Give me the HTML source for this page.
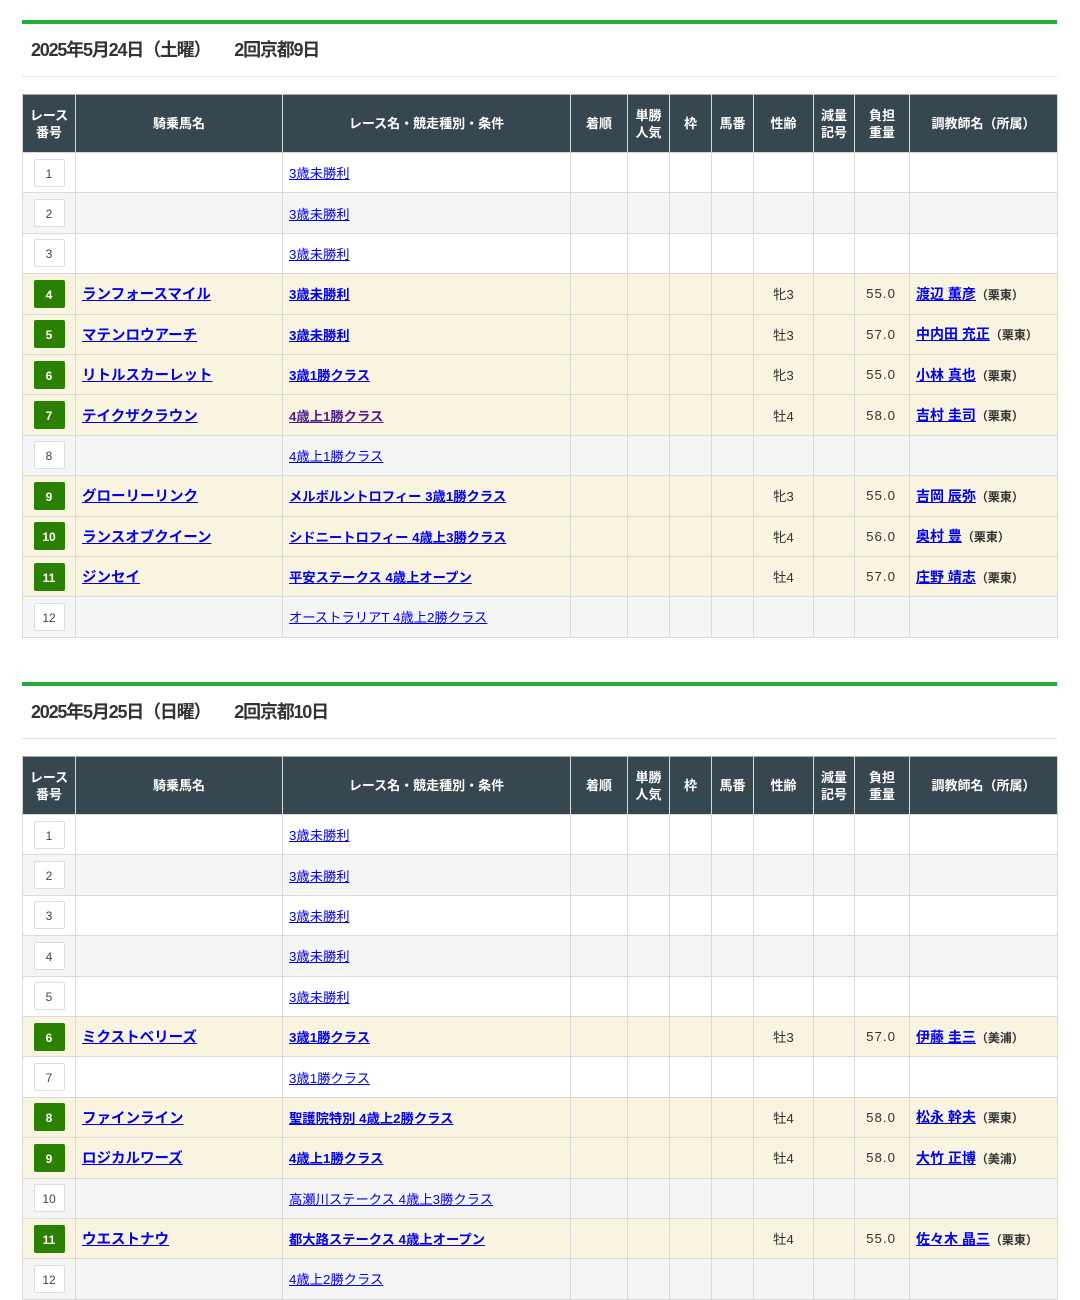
<!DOCTYPE html>
<html><head><meta charset="utf-8"><style>
*{margin:0;padding:0;box-sizing:border-box}
body{width:1080px;height:1293px;overflow:hidden;background:#fff;font-family:"Liberation Sans Narrow","Liberation Sans","Noto Sans CJK JP",sans-serif;color:#333;position:relative}
.sec{position:absolute;left:22px;width:1035px}
.bar{height:4px;background:#22ac38}
.ttl{height:53px;border-bottom:1px solid #e3e3e3;font-size:18px;font-weight:bold;color:#333;padding-left:9px;line-height:53px;letter-spacing:-1.2px}
.ttl span{margin-left:24px}
table{margin-top:17px;border-collapse:collapse;width:1035px;table-layout:fixed;font-size:13.3px}
th{background:#37474f;color:#fff;font-size:13px;font-weight:bold;height:58px;border:1px solid #d6d6d6;line-height:17px;border-top:1px solid #aaa}
td{height:40.4px;border:1px solid #dadada;padding:0 6px;white-space:nowrap}
tr.w td{background:#fff}tr.g td{background:#f5f5f5}tr.a td{background:#f8f4e0}
td.n{text-align:center;padding:0}
.b{display:inline-block;width:31px;height:28px;line-height:28px;border:1px solid #ddd;border-radius:2px;background:#fff;font-size:12px;color:#444;text-align:center}
.b.on{background:#2a8000;color:#fff;border-color:#2a8000;font-weight:bold}
a{color:#00e;text-decoration:underline}
tr.a a{font-weight:bold}
td.h a{font-size:14.5px}
td.t a{font-size:14px}
td.c{text-align:center}td.r{text-align:right;padding-right:13px;letter-spacing:1px}
small{font-size:12px;font-weight:bold;color:#333}
</style></head><body>

<div class="sec" style="top:20px">
<div class="bar"></div>
<div class="ttl">2025年5月24日（土曜）<span>2回京都9日</span></div>
<table>
<colgroup><col style="width:53px"><col style="width:207px"><col style="width:288px"><col style="width:57px"><col style="width:42px"><col style="width:42px"><col style="width:42px"><col style="width:60px"><col style="width:41px"><col style="width:55px"><col style="width:148px"></colgroup>
<tr><th>レース<br>番号</th><th>騎乗馬名</th><th>レース名・競走種別・条件</th><th>着順</th><th>単勝<br>人気</th><th>枠</th><th>馬番</th><th>性齢</th><th>減量<br>記号</th><th>負担<br>重量</th><th>調教師名（所属）</th></tr>
<tr class="w"><td class="n"><span class="b">1</span></td><td></td><td><a>3歳未勝利</a></td><td></td><td></td><td></td><td></td><td></td><td></td><td></td><td></td></tr>
<tr class="g"><td class="n"><span class="b">2</span></td><td></td><td><a>3歳未勝利</a></td><td></td><td></td><td></td><td></td><td></td><td></td><td></td><td></td></tr>
<tr class="w"><td class="n"><span class="b">3</span></td><td></td><td><a>3歳未勝利</a></td><td></td><td></td><td></td><td></td><td></td><td></td><td></td><td></td></tr>
<tr class="a"><td class="n"><span class="b on">4</span></td><td class="h"><a>ランフォースマイル</a></td><td><a>3歳未勝利</a></td><td></td><td></td><td></td><td></td><td class="c">牝3</td><td></td><td class="r">55.0</td><td class="t"><a>渡辺 薫彦</a><small>（栗東）</small></td></tr>
<tr class="a"><td class="n"><span class="b on">5</span></td><td class="h"><a>マテンロウアーチ</a></td><td><a>3歳未勝利</a></td><td></td><td></td><td></td><td></td><td class="c">牡3</td><td></td><td class="r">57.0</td><td class="t"><a>中内田 充正</a><small>（栗東）</small></td></tr>
<tr class="a"><td class="n"><span class="b on">6</span></td><td class="h"><a>リトルスカーレット</a></td><td><a>3歳1勝クラス</a></td><td></td><td></td><td></td><td></td><td class="c">牝3</td><td></td><td class="r">55.0</td><td class="t"><a>小林 真也</a><small>（栗東）</small></td></tr>
<tr class="a"><td class="n"><span class="b on">7</span></td><td class="h"><a>テイクザクラウン</a></td><td><a style="color:#551a8b">4歳上1勝クラス</a></td><td></td><td></td><td></td><td></td><td class="c">牡4</td><td></td><td class="r">58.0</td><td class="t"><a>吉村 圭司</a><small>（栗東）</small></td></tr>
<tr class="g"><td class="n"><span class="b">8</span></td><td></td><td><a>4歳上1勝クラス</a></td><td></td><td></td><td></td><td></td><td></td><td></td><td></td><td></td></tr>
<tr class="a"><td class="n"><span class="b on">9</span></td><td class="h"><a>グローリーリンク</a></td><td><a>メルボルントロフィー 3歳1勝クラス</a></td><td></td><td></td><td></td><td></td><td class="c">牝3</td><td></td><td class="r">55.0</td><td class="t"><a>吉岡 辰弥</a><small>（栗東）</small></td></tr>
<tr class="a"><td class="n"><span class="b on">10</span></td><td class="h"><a>ランスオブクイーン</a></td><td><a>シドニートロフィー 4歳上3勝クラス</a></td><td></td><td></td><td></td><td></td><td class="c">牝4</td><td></td><td class="r">56.0</td><td class="t"><a>奥村 豊</a><small>（栗東）</small></td></tr>
<tr class="a"><td class="n"><span class="b on">11</span></td><td class="h"><a>ジンセイ</a></td><td><a>平安ステークス 4歳上オープン</a></td><td></td><td></td><td></td><td></td><td class="c">牡4</td><td></td><td class="r">57.0</td><td class="t"><a>庄野 靖志</a><small>（栗東）</small></td></tr>
<tr class="g"><td class="n"><span class="b">12</span></td><td></td><td><a>オーストラリアT 4歳上2勝クラス</a></td><td></td><td></td><td></td><td></td><td></td><td></td><td></td><td></td></tr>
</table>
</div>

<div class="sec" style="top:682px">
<div class="bar"></div>
<div class="ttl">2025年5月25日（日曜）<span>2回京都10日</span></div>
<table>
<colgroup><col style="width:53px"><col style="width:207px"><col style="width:288px"><col style="width:57px"><col style="width:42px"><col style="width:42px"><col style="width:42px"><col style="width:60px"><col style="width:41px"><col style="width:55px"><col style="width:148px"></colgroup>
<tr><th>レース<br>番号</th><th>騎乗馬名</th><th>レース名・競走種別・条件</th><th>着順</th><th>単勝<br>人気</th><th>枠</th><th>馬番</th><th>性齢</th><th>減量<br>記号</th><th>負担<br>重量</th><th>調教師名（所属）</th></tr>
<tr class="w"><td class="n"><span class="b">1</span></td><td></td><td><a>3歳未勝利</a></td><td></td><td></td><td></td><td></td><td></td><td></td><td></td><td></td></tr>
<tr class="g"><td class="n"><span class="b">2</span></td><td></td><td><a>3歳未勝利</a></td><td></td><td></td><td></td><td></td><td></td><td></td><td></td><td></td></tr>
<tr class="w"><td class="n"><span class="b">3</span></td><td></td><td><a>3歳未勝利</a></td><td></td><td></td><td></td><td></td><td></td><td></td><td></td><td></td></tr>
<tr class="g"><td class="n"><span class="b">4</span></td><td></td><td><a>3歳未勝利</a></td><td></td><td></td><td></td><td></td><td></td><td></td><td></td><td></td></tr>
<tr class="w"><td class="n"><span class="b">5</span></td><td></td><td><a>3歳未勝利</a></td><td></td><td></td><td></td><td></td><td></td><td></td><td></td><td></td></tr>
<tr class="a"><td class="n"><span class="b on">6</span></td><td class="h"><a>ミクストベリーズ</a></td><td><a>3歳1勝クラス</a></td><td></td><td></td><td></td><td></td><td class="c">牡3</td><td></td><td class="r">57.0</td><td class="t"><a>伊藤 圭三</a><small>（美浦）</small></td></tr>
<tr class="w"><td class="n"><span class="b">7</span></td><td></td><td><a>3歳1勝クラス</a></td><td></td><td></td><td></td><td></td><td></td><td></td><td></td><td></td></tr>
<tr class="a"><td class="n"><span class="b on">8</span></td><td class="h"><a>ファインライン</a></td><td><a>聖護院特別 4歳上2勝クラス</a></td><td></td><td></td><td></td><td></td><td class="c">牡4</td><td></td><td class="r">58.0</td><td class="t"><a>松永 幹夫</a><small>（栗東）</small></td></tr>
<tr class="a"><td class="n"><span class="b on">9</span></td><td class="h"><a>ロジカルワーズ</a></td><td><a>4歳上1勝クラス</a></td><td></td><td></td><td></td><td></td><td class="c">牡4</td><td></td><td class="r">58.0</td><td class="t"><a>大竹 正博</a><small>（美浦）</small></td></tr>
<tr class="g"><td class="n"><span class="b">10</span></td><td></td><td><a>高瀬川ステークス 4歳上3勝クラス</a></td><td></td><td></td><td></td><td></td><td></td><td></td><td></td><td></td></tr>
<tr class="a"><td class="n"><span class="b on">11</span></td><td class="h"><a>ウエストナウ</a></td><td><a>都大路ステークス 4歳上オープン</a></td><td></td><td></td><td></td><td></td><td class="c">牡4</td><td></td><td class="r">55.0</td><td class="t"><a>佐々木 晶三</a><small>（栗東）</small></td></tr>
<tr class="g"><td class="n"><span class="b">12</span></td><td></td><td><a>4歳上2勝クラス</a></td><td></td><td></td><td></td><td></td><td></td><td></td><td></td><td></td></tr>
</table>
</div>
</body></html>
